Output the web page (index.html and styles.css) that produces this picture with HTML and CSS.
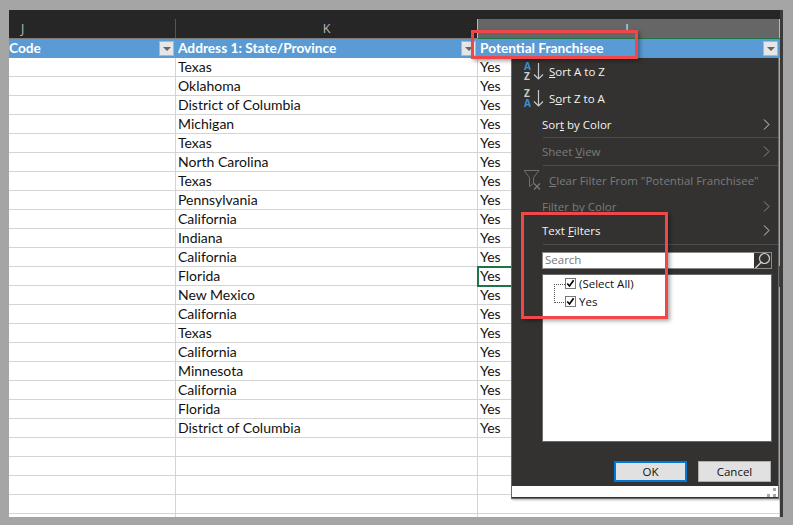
FILE: index.html
```html
<!DOCTYPE html>
<html lang="en">
<head>
    <meta charset="UTF-8">
    <title>Potential Franchisee filter</title>
    <link rel="stylesheet" href="styles.css">
</head>
<body>
    <div class="sheet">
        <div class="row col-heads">
            <div class="head head-first">J</div>
            <div class="head">K</div>
            <div class="head head-active">L</div>
        </div>
        <div class="row titles">
            <div class="title">Code<span class="drop"></span></div>
            <div class="title">Address 1: State/Province<span class="drop"></span></div>
            <div class="title">Potential Franchisee<span class="drop"></span></div>
        </div>
        <div class="row"><div class="cell"></div><div class="cell">Texas</div><div class="cell">Yes</div></div>
        <div class="row"><div class="cell"></div><div class="cell">Oklahoma</div><div class="cell">Yes</div></div>
        <div class="row"><div class="cell"></div><div class="cell">District of Columbia</div><div class="cell">Yes</div></div>
        <div class="row"><div class="cell"></div><div class="cell">Michigan</div><div class="cell">Yes</div></div>
        <div class="row"><div class="cell"></div><div class="cell">Texas</div><div class="cell">Yes</div></div>
        <div class="row"><div class="cell"></div><div class="cell">North Carolina</div><div class="cell">Yes</div></div>
        <div class="row"><div class="cell"></div><div class="cell">Texas</div><div class="cell">Yes</div></div>
        <div class="row"><div class="cell"></div><div class="cell">Pennsylvania</div><div class="cell">Yes</div></div>
        <div class="row"><div class="cell"></div><div class="cell">California</div><div class="cell">Yes</div></div>
        <div class="row"><div class="cell"></div><div class="cell">Indiana</div><div class="cell">Yes</div></div>
        <div class="row"><div class="cell"></div><div class="cell">California</div><div class="cell">Yes</div></div>
        <div class="row"><div class="cell"></div><div class="cell">Florida</div><div class="cell cell-picked">Yes</div></div>
        <div class="row"><div class="cell"></div><div class="cell">New Mexico</div><div class="cell">Yes</div></div>
        <div class="row"><div class="cell"></div><div class="cell">California</div><div class="cell">Yes</div></div>
        <div class="row"><div class="cell"></div><div class="cell">Texas</div><div class="cell">Yes</div></div>
        <div class="row"><div class="cell"></div><div class="cell">California</div><div class="cell">Yes</div></div>
        <div class="row"><div class="cell"></div><div class="cell">Minnesota</div><div class="cell">Yes</div></div>
        <div class="row"><div class="cell"></div><div class="cell">California</div><div class="cell">Yes</div></div>
        <div class="row"><div class="cell"></div><div class="cell">Florida</div><div class="cell">Yes</div></div>
        <div class="row"><div class="cell"></div><div class="cell">District of Columbia</div><div class="cell">Yes</div></div>
        <div class="row"><div class="cell"></div><div class="cell"></div><div class="cell"></div></div>
        <div class="row"><div class="cell"></div><div class="cell"></div><div class="cell"></div></div>
        <div class="row"><div class="cell"></div><div class="cell"></div><div class="cell"></div></div>
        <div class="row"><div class="cell"></div><div class="cell"></div><div class="cell"></div></div>
        <div class="row"><div class="cell"></div><div class="cell"></div><div class="cell"></div></div>

        <!-- filter dropdown -->
        <div class="menu">
            <div class="item item-sort item-sort-first">
                <div class="sort-mark">
                    <div class="az-stack"><span class="az-blue">A</span><span class="az-gray">Z</span></div>
                    <svg width="11" height="19" viewBox="0 0 11 19"><path d="M5.500 1v16M1 12.500l4.500 4.500 4.500-4.500" fill="none" stroke="#c8c8c8" stroke-width="1.200"/></svg>
                </div>
                <span><u>S</u>ort A to Z</span>
            </div>
            <div class="item item-sort">
                <div class="sort-mark">
                    <div class="az-stack"><span class="az-gray">Z</span><span class="az-blue">A</span></div>
                    <svg width="11" height="19" viewBox="0 0 11 19"><path d="M5.500 1v16M1 12.500l4.500 4.500 4.500-4.500" fill="none" stroke="#c8c8c8" stroke-width="1.200"/></svg>
                </div>
                <span>S<u>o</u>rt Z to A</span>
            </div>
            <div class="item item-plain">
                <span>Sor<u>t</u> by Color</span>
                <svg class="chev" width="7" height="11" viewBox="0 0 7 11"><path d="M1 .5l5 5-5 5" fill="none" stroke="#cfcfcf"/></svg>
            </div>
            <div class="sep"></div>
            <div class="item item-plain item-off item-view">
                <span>Sheet <u>V</u>iew</span>
                <svg class="chev" width="7" height="11" viewBox="0 0 7 11"><path d="M1 .5l5 5-5 5" fill="none" stroke="#8a8a8a"/></svg>
            </div>
            <div class="sep"></div>
            <div class="item item-clear item-off">
                <svg class="sort-icon" width="25" height="22" viewBox="0 0 25 22">
                    <path d="M0 1.500h15l-5.500 7v6l-4 3v-9z" fill="none" stroke="#6f6f6f"/>
                    <path d="M10 14.500l6 6M16 14.500l-6 6" fill="none" stroke="#7a7a7a" stroke-width="1.200"/>
                </svg>
                <span><u>C</u>lear Filter From "Potential Franchisee"</span>
            </div>
            <div class="item item-plain item-off item-color">
                <span>Filter by Color</span>
                <svg class="chev" width="7" height="11" viewBox="0 0 7 11"><path d="M1 .5l5 5-5 5" fill="none" stroke="#8a8a8a"/></svg>
            </div>
            <div class="item item-plain item-text">
                <span>Text <u>F</u>ilters</span>
                <svg class="chev" width="7" height="11" viewBox="0 0 7 11"><path d="M1 .5l5 5-5 5" fill="none" stroke="#cfcfcf"/></svg>
            </div>
            <div class="sep"></div>
            <div class="search">
                <div class="search-text">Search</div>
                <div class="search-btn">
                    <svg width="17" height="17" viewBox="0 0 17 17">
                        <circle cx="10.500" cy="6.500" r="5" fill="none" stroke="#d0d0d0" stroke-width="1.200"/>
                        <path d="M7 10.500L1.500 16" stroke="#d0d0d0" stroke-width="1.500"/>
                    </svg>
                </div>
            </div>
            <div class="list">
                <div class="list-row">
                    <span class="tree tree-top"></span>
                    <svg class="check" width="11" height="11" viewBox="0 0 11 11"><path d="M1.500 5.500l2.800 3 5-7" fill="none" stroke="#000" stroke-width="2"/></svg>
                    <span>(Select All)</span>
                </div>
                <div class="list-row">
                    <span class="tree tree-bottom"></span>
                    <svg class="check" width="11" height="11" viewBox="0 0 11 11"><path d="M1.500 5.500l2.800 3 5-7" fill="none" stroke="#000" stroke-width="2"/></svg>
                    <span>Yes</span>
                </div>
            </div>
            <div class="buttons">
                <div class="btn btn-ok">OK</div>
                <div class="btn">Cancel</div>
            </div>
            <div class="menu-foot">
                <svg width="9" height="9" viewBox="0 0 9 9" fill="#a8a8a8">
                    <rect x="6" y="0" width="3" height="3"/>
                    <rect x="0" y="6" width="3" height="3"/>
                    <rect x="6" y="6" width="3" height="3"/>
                </svg>
            </div>
        </div>

        <div class="callout callout-title"></div>
        <div class="callout callout-filters"></div>
    </div>
</body>
</html>
```

FILE: styles.css
```css
html, body {
    margin: 0;
    height: 100%;
}
body {
    background: #a5a5a5;
    font-family: "Lato", "Open Sans", sans-serif;
    overflow: hidden;
    padding: 10px 10px 8px 9px;
    box-sizing: border-box;
}
.sheet {
    position: relative;
    width: 774px;
    height: 507px;
    background: #fff;
    border-right: 3px solid #3a3a3a;
    box-sizing: border-box;
    overflow: hidden;
}
.row {
    display: grid;
    grid-template-columns: 167px 302px 302px;
    height: 19px;
}
.col-heads {
    height: 28px;
    background: #262626;
}
.head {
    color: #b9b9b9;
    font-family: "Open Sans", sans-serif;
    font-size: 12.500px;
    text-align: center;
    margin-top: 9px;
    line-height: 19px;
    border-right: 1px solid #555;
    box-sizing: border-box;
}
.head-first {
    text-align: left;
    padding-left: 12px;
}
.head-active {
    background: #666;
    color: #e0e0e0;
    border-left: 1px solid #b8b8b8;
    border-right: 1px solid #b8b8b8;
    margin-left: -1px;
}
.titles {
    height: 20px;
    background: #5b9bd5;
    border-top: 1px solid #7d7d7d;
    box-sizing: border-box;
}
.title {
    position: relative;
    color: #fff;
    font-weight: 700;
    font-size: 13.700px;
    line-height: 18px;
    padding-left: 2px;
}
.title:first-child {
    padding-left: 0;
}
.title:last-child {
    border-top: 1px solid #1f7346;
    margin-top: -1px;
}
.drop {
    position: absolute;
    right: 2px;
    top: 2px;
    width: 15px;
    height: 15px;
    background: #e6e6e6;
    border: 1px solid #b5b5b5;
    box-sizing: border-box;
}
.drop::after {
    content: "";
    position: absolute;
    left: 3px;
    top: 5px;
    border-left: 4px solid transparent;
    border-right: 4px solid transparent;
    border-top: 4px solid #666;
}
.cell {
    font-size: 14px;
    line-height: 18px;
    color: #111;
    padding-left: 2px;
    border-right: 1px solid #d4d4d4;
    border-bottom: 1px solid #d4d4d4;
    box-sizing: border-box;
}
.cell-picked {
    outline: 2px solid #1f7346;
    outline-offset: -1px;
    position: relative;
}
.menu {
    position: absolute;
    left: 502px;
    top: 48px;
    width: 268px;
    height: 441px;
    background: #333230;
    border: 1px solid #6a6a6a;
    border-top: 0;
    box-sizing: border-box;
    box-shadow: 1px 1px 2px rgba(0, 0, 0, 0.3);
    color: #f2f2f2;
    font-family: "Open Sans", sans-serif;
    font-size: 11.500px;
    display: flex;
    flex-direction: column;
}
.item {
    display: flex;
    align-items: center;
    flex: none;
    white-space: nowrap;
}
.item-sort {
    height: 28px;
    padding-left: 12px;
}
.item-sort-first {
    height: 26px;
}
.sort-mark {
    display: flex;
    align-items: center;
    gap: 1px;
    width: 25px;
    flex: none;
}
.az-stack {
    display: flex;
    flex-direction: column;
    font-size: 10px;
    font-weight: 700;
    line-height: 10px;
    width: 8px;
}
.az-blue {
    color: #3f8fd4;
}
.az-gray {
    color: #cfcfcf;
}
.sort-icon {
    flex: none;
}
.item-plain {
    height: 25px;
    padding: 0 8px 0 30px;
    justify-content: space-between;
}
.item-off {
    color: #7b7b7b;
}
.item-view {
    height: 26px;
    padding-bottom: 2px;
    box-sizing: border-box;
}
.item-clear {
    height: 28px;
    padding-left: 12px;
    padding-bottom: 2px;
    box-sizing: border-box;
}
.item-color {
    height: 24px;
    padding-bottom: 2px;
    box-sizing: border-box;
}
.item-text {
    height: 25px;
    padding-bottom: 2px;
    box-sizing: border-box;
}
.sep {
    height: 1px;
    margin: 0 0 1px 31px;
    background: #4d4d4d;
    flex: none;
}
.search {
    display: flex;
    height: 15px;
    margin: 6px 6px 0 30px;
    flex: none;
    border: 1px solid #8a8a8a;
}
.search-text {
    flex: 1;
    background: #fff;
    color: #777;
    line-height: 14px;
    padding-left: 2px;
}
.search-btn {
    width: 17px;
    background: #333230;
    display: flex;
    align-items: center;
    justify-content: center;
}
.list {
    height: 168px;
    margin: 5px 6px 0 30px;
    background: #fff;
    border: 1px solid #6a6a6a;
    box-sizing: border-box;
    color: #111;
    flex: none;
}
.list-row {
    position: relative;
    display: flex;
    align-items: center;
    height: 18px;
    padding-left: 22px;
    padding-bottom: 2px;
    box-sizing: border-box;
    gap: 3px;
}
.check {
    border: 1px solid #777;
    box-sizing: border-box;
    flex: none;
    background: #fff;
}
.tree {
    position: absolute;
    left: 11px;
    width: 10px;
}
.tree-top {
    top: 9px;
    height: 18px;
    border-left: 1px dotted #555;
    border-top: 1px dotted #555;
}
.tree-bottom {
    top: 9px;
    border-bottom: 1px dotted #555;
}
.buttons {
    display: flex;
    justify-content: flex-end;
    gap: 11px;
    margin: 19px 7px 0 0;
    flex: none;
}
.btn {
    width: 73px;
    height: 21px;
    background: #e1e1e1;
    border: 1px solid #adadad;
    box-sizing: border-box;
    color: #111;
    line-height: 19px;
    text-align: center;
}
.btn-ok {
    border: 2px solid #0078d7;
    line-height: 17px;
}
.menu-foot {
    margin-top: auto;
    height: 11px;
    background: #fdfdfd;
    display: flex;
    justify-content: flex-end;
    align-items: flex-end;
    padding-right: 2px;
    margin-bottom: 1px;
}
.callout {
    position: absolute;
    border: 3px solid #f0474b;
    box-sizing: border-box;
    box-shadow: 2px 2px 4px rgba(0, 0, 0, 0.35);
}
.callout-title {
    left: 462px;
    top: 20px;
    width: 167px;
    height: 29px;
}
.callout-filters {
    left: 512px;
    top: 202px;
    width: 147px;
    height: 107px;
}
```
